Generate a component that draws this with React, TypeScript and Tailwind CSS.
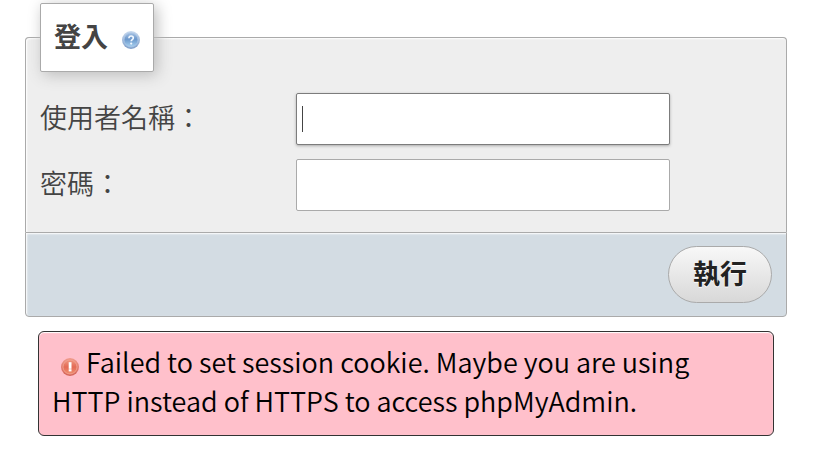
import type { ReactNode } from 'react'

type FieldProps = {
  id: string
  label: string
  type: 'text' | 'password'
  active?: boolean
}

function HelpIcon() {
  return (
    <svg className="h-[18px] w-[18px]" viewBox="0 0 18 18" aria-hidden="true">
      <defs>
        <linearGradient id="help-fill" x1="0" y1="0" x2="0" y2="1">
          <stop offset="0" stopColor="#a3c0e2" />
          <stop offset="0.45" stopColor="#6c98cc" />
          <stop offset="1" stopColor="#a8d2f0" />
        </linearGradient>
        <linearGradient id="help-ring" x1="0" y1="0" x2="0" y2="1">
          <stop offset="0" stopColor="#c6d8ee" />
          <stop offset="1" stopColor="#7f9fca" />
        </linearGradient>
      </defs>
      <circle cx="9" cy="9" r="9" fill="url(#help-ring)" />
      <circle cx="9" cy="9" r="7" fill="url(#help-fill)" stroke="#a9c4e4" strokeWidth="0.8" />
      <path
        d="M6.9 7.2C7 5.6 7.9 5 9.1 5c1.3 0 2.2.8 2.2 2 0 1.6-2.1 1.7-2.1 3.3"
        fill="none"
        stroke="#f4f9ff"
        strokeWidth="1.6"
      />
      <circle cx="9.2" cy="12.6" r="1.1" fill="#f4f9ff" />
    </svg>
  )
}

function ErrorIcon() {
  return (
    <svg className="mr-px ml-[9px] inline-block h-[18px] w-[18px] align-[-3px]" viewBox="0 0 18 18" aria-hidden="true">
      <defs>
        <linearGradient id="error-fill" x1="0" y1="0" x2="0" y2="1">
          <stop offset="0" stopColor="#ee9680" />
          <stop offset="0.5" stopColor="#e46a55" />
          <stop offset="1" stopColor="#ee8f70" />
        </linearGradient>
        <linearGradient id="error-ring" x1="0" y1="0" x2="0" y2="1">
          <stop offset="0" stopColor="#f09a8a" />
          <stop offset="1" stopColor="#d46458" />
        </linearGradient>
      </defs>
      <circle cx="9" cy="9" r="9" fill="url(#error-ring)" />
      <circle cx="9" cy="9" r="7" fill="url(#error-fill)" stroke="#f2a592" strokeWidth="0.8" />
      <rect x="7.7" y="4.2" width="2.8" height="6.6" fill="#fff" />
      <rect x="7.7" y="11.2" width="2.8" height="2.2" fill="#fff" />
    </svg>
  )
}

function Field({ id, label, type, active = false }: FieldProps) {
  return (
    <div className="flex items-center">
      <label htmlFor={id} className="w-[35%] pb-1 text-[27px] leading-9 font-[350]">
        {label}
      </label>
      <div className="relative w-[51%]">
        <input
          id={id}
          name={id}
          type={type}
          className={`block h-[52px] w-full rounded-xs border bg-white px-1.5 text-[27px] caret-transparent outline-none ${
            active ? 'border-[#7c7c7c] shadow-[0_1px_3px_#aaa]' : 'border-[#aaa]'
          }`}
        />
        {active && (
          <span className="pointer-events-none absolute inset-y-0 left-1.5 my-auto h-[26px] w-px bg-[#444]" />
        )}
      </div>
    </div>
  )
}

function ErrorMessage({ children }: { children: ReactNode }) {
  return (
    <div
      role="alert"
      className="mx-[13px] mt-3.5 rounded-md border border-[#333] bg-[#ffc0cb] px-[13px] pt-2.5 pb-[15px] text-[27px] leading-[39px] font-[350] text-black shadow-[inset_0_1px_1px_#fff]"
    >
      <ErrorIcon /> {children}
    </div>
  )
}

export default function App() {
  return (
    <main className="bg-white pt-[3px] pr-9 pl-[25px] font-['Noto_Sans_CJK_TC',sans-serif] text-[#444]">
      <form onSubmit={(e) => e.preventDefault()}>
        <fieldset className="rounded-t border border-b-0 border-[#aaa] bg-[#eee] px-3.5 pb-[21px] shadow-[inset_1px_1px_2px_#fff]">
          <legend className="flex h-[69px] items-center gap-3.5 rounded-xs border border-[#aaa] bg-white px-[13px] text-[27px] font-bold shadow-[3px_3px_15px_#bbb]">
            <span className="pb-0.5">登入</span>
            <a href="#help" aria-label="說明文件" className="mt-1">
              <HelpIcon />
            </a>
          </legend>
          <div className="flex flex-col gap-3.5 pt-[21px]">
            <Field id="username" label="使用者名稱：" type="text" active />
            <Field id="password" label="密碼：" type="password" />
          </div>
        </fieldset>
        <div className="flex justify-end rounded-b border border-[#aaa] bg-[#d3dce3] px-3.5 py-[13px] shadow-[inset_1px_1px_2px_#fff]">
          <button
            type="submit"
            className="h-[57px] rounded-full border border-[#aaa] bg-linear-to-b from-[#f8f8f8] to-[#d8d8d8] px-6 pb-0.5 text-[27px] font-bold text-[#222] [text-shadow:0_1px_0_#fff]"
          >
            執行
          </button>
        </div>
      </form>
      <ErrorMessage>
        Failed to set session cookie. Maybe you are using HTTP instead of HTTPS to access phpMyAdmin.
      </ErrorMessage>
    </main>
  )
}
